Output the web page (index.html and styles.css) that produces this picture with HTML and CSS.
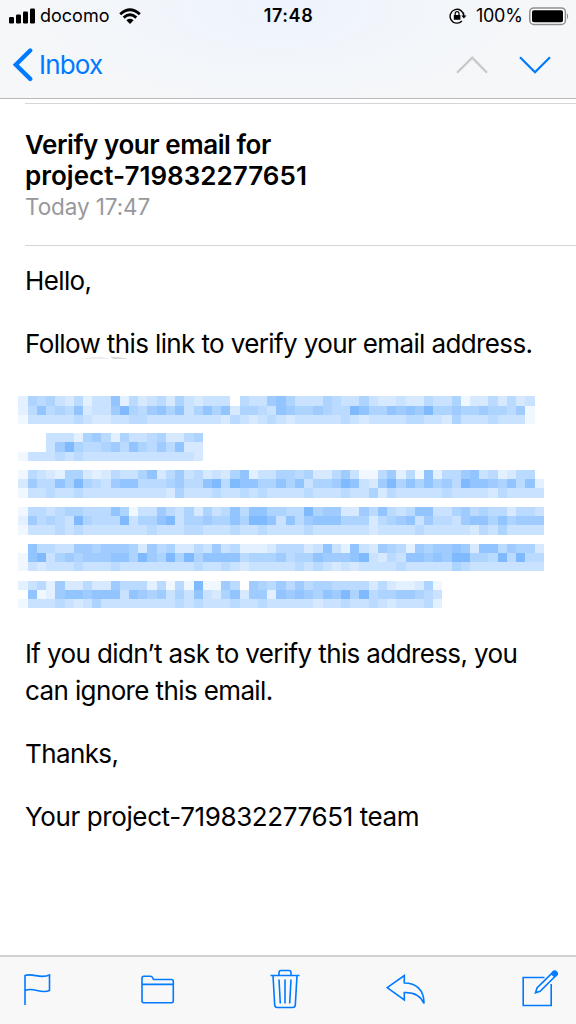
FILE: index.html
```
<!DOCTYPE html>
<html lang="en">
<head>
<meta charset="utf-8">
<title>Mail</title>
<link rel="stylesheet" href="styles.css">
</head>
<body>
<div class="screen">
  <header class="top">
    <div class="status">
      <div class="carrier">
        <svg class="signal" width="26" height="16" viewBox="0 0 26 16"><rect x="0" y="9" width="5" height="6.5" rx="1.3"/><rect x="7" y="6.5" width="5" height="9" rx="1.3"/><rect x="14" y="3.5" width="5" height="12" rx="1.3"/><rect x="21" y="0.5" width="5" height="15" rx="1.3"/></svg>
        <span class="carrier-name">docomo</span>
        <svg class="wifi" width="22" height="17" viewBox="0 0 22 17"><g fill="none" stroke="#000" stroke-width="2.8"><path d="M1.2 6.2Q11-2.8 20.8 6.2"/><path d="M4.7 9.6Q11 3.8 17.3 9.6"/></g><path d="M7.4 12.3Q11 9.4 14.6 12.3L11 16Z"/></svg>
      </div>
      <div class="clock">17:48</div>
      <div class="power">
        <svg class="lock" width="18" height="17" viewBox="0 0 18 17"><path d="M12.900 13.100A6.900 6.900 0 1 1 14.900 8" fill="none" stroke="#000" stroke-width="1.4"/><path d="M12.300 7.400h5.200L14.900 10.600z"/><rect x="4.800" y="7" width="6.600" height="4.800" rx=".5"/><path d="M6.200 7.200V5.600a1.900 1.900 0 0 1 3.800 0v1.600" fill="none" stroke="#000" stroke-width="1.200"/></svg>
        <span class="percent">100%</span>
        <svg class="battery" width="41" height="19" viewBox="0 0 41 19"><rect x=".8" y=".9" width="35.6" height="16.6" rx="4" fill="#fff" stroke="#8e8e90" stroke-width="1.5"/><rect x="3" y="3.2" width="31" height="12" rx="1.8"/><path d="M38 6.200q2.400 3 0 6z" fill="#8e8e90"/></svg>
      </div>
    </div>
    <nav class="nav">
      <a class="back"><svg width="20" height="34" viewBox="0 0 20 34"><path d="M17.200 2.500 2.800 16.700l14.400 14.200" class="chevron"/></svg><span>Inbox</span></a>
      <div class="arrows">
        <svg width="32" height="18" viewBox="0 0 32 18"><path d="M1 16.700 16.200 1.700 31 16.700" class="arrow off"/></svg>
        <svg width="32" height="18" viewBox="0 0 32 18"><path d="M1 1.300 16 16.200 31 1.300" class="arrow"/></svg>
      </div>
    </nav>
  </header>

  <main class="mail">
    <section class="subject">
      <h1><span class="s1">Verify your email for</span><br><span class="s2">project-719832277651</span></h1>
      <div class="date">Today 17:47</div>
    </section>
    <article class="body">
      <p>Hello,</p>
      <p class="follow">Follow this link to verify your email address.<svg class="smudge" width="50" height="4" viewBox="0 0 50 4"><path d="M0 3Q8 .5 20 .8L28 3z" fill="#ededed"/><path d="M28 .6Q38 .8 47 3H31z" fill="#d8d8d8"/></svg></p>
      <svg class="masked" id="masked" width="526" height="212" viewBox="0 0 526 212"></svg>
      <p>If you didn’t ask to verify this address, you<br>can ignore this email.</p>
      <p>Thanks,</p>
      <p class="team">Your project-719832277651 team</p>
    </article>
  </main>

  <footer class="toolbar">
    <svg width="28" height="33" viewBox="0 0 28 33"><path d="M2 32V2.500C10-.5 17 6.500 26.500 2V17.500C17.500 21.500 10.500 13.500 2 17.500"/></svg>
    <svg class="folder" width="34" height="29" viewBox="0 0 34 29"><path d="M1 25.500V3Q1 1.300 2.700 1.300H9.500Q11 1.300 11.600 2.700L12.500 4.500H30.500Q32.300 4.500 32.300 6.300V26Q32.300 27.700 30.500 27.700H2.800Q1 27.700 1 26zM1 9.400H32.300"/></svg>
    <svg class="trash" width="30" height="40" viewBox="0 0 30 40"><path d="M.5 6.500H29.500M9 6V3.600Q9 1.500 11.100 1.500H18.900Q21 1.500 21 3.600V6M3 6.500 4.700 36Q4.900 38.500 7.400 38.500H22.600Q25.100 38.500 25.300 36L27 6.500M9 10.500 10.300 34.500M15 10.500V34.500M21 10.500 19.700 34.500"/></svg>
    <svg class="reply" width="39" height="31" viewBox="0 0 39 31"><path d="M1.200 13.700 18.300 1.500V9C30 9 38.200 16 38 29.500C34.500 21 28 18.200 18.300 18.500V26z"/></svg>
    <svg class="compose" width="36" height="37" viewBox="0 0 36 37"><path d="M22.500 7.500H1.200V35.500H29.200V14M13.500 22.700 15 18 29.500 3.600 32.700 6.800 18.100 21.200z"/><path class="tip" d="M30.300 2.500 31.400 1.400Q33 .5 34.500 2T34.700 5L33.700 6z"/></svg>
  </footer>
</div>
<script src="masked.js"></script>
</body>
</html>
```
FILE: styles.css
```
body { margin: 0; background: #fff; }
.screen {
  display: flex; flex-direction: column;
  width: 576px; height: 1024px; overflow: hidden;
  font-family: Inter, "Liberation Sans", sans-serif; color: #000;
}
svg { display: block; flex: none; }
.top {
  box-sizing: border-box; height: 99px; flex: none;
  border-bottom: 1px solid #b8b8ba;
  background: radial-gradient(ellipse 300px 115px at 48% 10%, #eef3fd, rgba(241,246,252,.6) 55%, rgba(247,247,247,0)), #f6f7f8;
}
.status {
  display: grid; grid-template-columns: 1fr auto 1fr; align-items: center;
  height: 32px; padding: 0 9px; font-size: 18px; line-height: 32px;
}
.carrier { display: flex; align-items: center; }
.carrier-name { margin-left: 5px; width: 70px; white-space: nowrap; }
.wifi { margin-left: 9px; }
.clock { font-weight: 600; letter-spacing: .6px; margin-left: 1px; }
.power { display: flex; align-items: center; justify-content: flex-end; }
.percent { width: 49px; margin: 0 4px 0 9px; letter-spacing: -.3px; white-space: nowrap; }
.battery { margin-right: -3px; }
.nav { display: flex; justify-content: space-between; align-items: center; height: 66px; padding: 0 25px 0 13px; }
.back { display: flex; align-items: center; gap: 6px; color: #007aff; font-size: 26px; line-height: 32px; letter-spacing: -.8px; padding-bottom: 1px; }
.chevron { fill: none; stroke: #007aff; stroke-width: 4.3; stroke-linecap: round; }
.arrows { display: flex; gap: 31px; }
.arrow { fill: none; stroke: #007aff; stroke-width: 2.3; }
.off { stroke: #c8c8ca; }
.mail { flex: 1; padding: 4px 0 0 25px; }
.subject { box-sizing: border-box; height: 143px; padding-top: 25px; border: solid #d5d5d7; border-width: 1px 0; }
h1 { margin: 0; font-size: 26px; line-height: 31px; font-weight: 600; white-space: nowrap; }
.s1 { letter-spacing: -.44px; }
.s2 { letter-spacing: .02px; }
.date { color: #98989c; font-size: 22.5px; line-height: 31px; letter-spacing: -.1px; }
.body { padding-top: 16px; font-size: 26px; line-height: 37px; white-space: nowrap; }
.body p { margin: 0 0 26px; letter-spacing: -.62px; }
.body .team { letter-spacing: -.39px; }
.body .follow { position: relative; }
.smudge { position: absolute; left: 57px; top: 31px; }
.masked { margin: 34px 0 27px -7px; }
.toolbar {
  display: flex; align-items: center;
  box-sizing: border-box; height: 69px; flex: none; padding: 0 18px 2px 23px;
  border-top: 2px solid #d2d2d2; background: #f8f8f8;
}
.toolbar svg { fill: none; stroke: #007aff; stroke-width: 1.6; }
.toolbar .tip { fill: #007aff; }
.folder { margin-left: 90px; }
.trash { margin: 0 0 2px 95px; }
.reply { margin-left: 86px; }
.compose { margin: 0 0 2px 97px; }
```
FILE: masked.js
```
// Brightness levels of the pixelated link; each text line is three rows of cells.
const shades = ['#ffffff', '#f0f7ff', '#e3f0ff', '#d6e9ff', '#c8e2ff', '#bbdaff', '#add3ff', '#9fcbff', '#92c5ff', '#7fbaff'];
const lines = [
  ['2656435244825345364 344405447864446544643 3433544613353534',
   '2585658344796578684 686836654876676559866 8787966766766571',
   '1444445433445544444 444354345434444454344 4455443644454441'],
  ['0004442675264456335 6',
   '0004796556758657583 3',
   '1444545444444444444 3'],
  ['1543266323544683574 534368244665633574115 72518255784523550',
   '3755869654788555675 589598866868466798437 96868675988768582',
   '1445445444444444364 445445454444544454463 54444454444354444'],
  ['1554566555861447546 364585886655967733758 54588446756553554',
   '2756549655594668946 676686998485788866635 67847554788686777',
   '1444545444444454445 544454454444544444434 44454444435464444'],
  ['0855447767776375633 547452223555348428437 65276778738857663',
   '1894676777886976969 688885666756687778943 54887879966595955',
   '1434445444544444444 544543444445454343444 45444446544444444'],
  ['2452733533755525151 911750765757566555535 322361',
   '0812788788848767464 843683772878768796956 677654',
   '1444543464444444454 544454454444434454454 344452']
];
const svg = document.getElementById('masked');
const size = 9.216;
lines.forEach((line, l) => line.forEach((row, r) => [...row.replace(/ /g, '')].forEach((level, c) => {
  if (level === '0') return;
  const cell = document.createElementNS('http://www.w3.org/2000/svg', 'rect');
  const x = Math.round(c * size + .43), y = Math.round((l * 4 + r) * size + .3);
  cell.setAttribute('x', x);
  cell.setAttribute('y', y);
  cell.setAttribute('width', Math.round((c + 1) * size + .43) - x);
  cell.setAttribute('height', Math.round((l * 4 + r + 1) * size + .3) - y);
  cell.setAttribute('fill', shades[level]);
  svg.appendChild(cell);
})));
```
